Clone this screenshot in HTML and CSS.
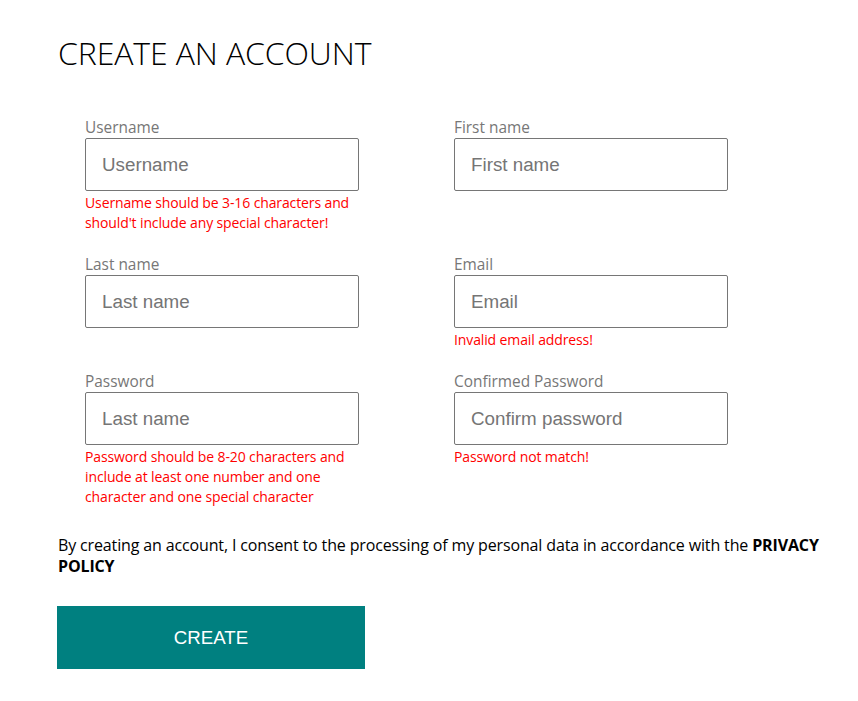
FILE: index.html
```html
<!DOCTYPE html>
<html lang="en">
<head>
<meta charset="utf-8">
<title>Create an account</title>
<link rel="stylesheet" href="styles.css">
</head>
<body>
<main class="page">
  <h1 class="title">CREATE AN ACCOUNT</h1>
  <form class="form">
    <div class="field">
      <label class="label">Username</label>
      <input class="input" type="text" placeholder="Username">
      <div class="error">Username should be 3-16 characters and should't include any special character!</div>
    </div>
    <div class="field">
      <label class="label">First name</label>
      <input class="input" type="text" placeholder="First name">
    </div>
    <div class="field">
      <label class="label">Last name</label>
      <input class="input" type="text" placeholder="Last name">
    </div>
    <div class="field">
      <label class="label">Email</label>
      <input class="input" type="text" placeholder="Email">
      <div class="error">Invalid email address!</div>
    </div>
    <div class="field">
      <label class="label">Password</label>
      <input class="input" type="text" placeholder="Last name">
      <div class="error">Password should be 8-20 characters and include at least one number and one character and one special character</div>
    </div>
    <div class="field">
      <label class="label">Confirmed Password</label>
      <input class="input" type="text" placeholder="Confirm password">
      <div class="error">Password not match!</div>
    </div>
  </form>
  <p class="consent">By creating an account, I consent to the processing of my personal data in accordance with the <b>PRIVACY</b> <b>POLICY</b></p>
  <button class="create" type="button">CREATE</button>
</main>
</body>
</html>
```
FILE: styles.css
```css
html, body {
  margin: 0;
  padding: 0;
  background: #ffffff;
}

.page {
  padding: 30px 0 0 58px;
  font-family: "Open Sans", "Noto Sans", sans-serif;
}

.title {
  margin: 0;
  font-size: 32px;
  font-weight: 300;
  line-height: 46px;
  color: #000;
  letter-spacing: -0.12px;
}

.form {
  display: grid;
  grid-template-columns: 274px 274px;
  column-gap: 95px;
  row-gap: 21px;
  align-items: start;
  margin: 41px 0 0 27px;
}

.field {
  display: flex;
  flex-direction: column;
}

.label {
  font-size: 15.4px;
  line-height: 21px;
  color: #777777;
}

.input {
  box-sizing: border-box;
  width: 274px;
  height: 53px;
  margin: 0;
  border: 1px solid #767676;
  border-radius: 2px;
  padding: 0 16px;
  font-family: "Liberation Sans", Arial, sans-serif;
  font-size: 18.8px;
  color: #000;
}

.input::placeholder {
  color: #757575;
}

.error {
  margin-top: 2px;
  font-size: 14px;
  line-height: 20px;
  color: #ff0000;
  letter-spacing: -0.12px;
}

.consent {
  width: 780px;
  margin: 28px 0 0 0;
  font-size: 16px;
  line-height: 21px;
  color: #000;
  letter-spacing: -0.14px;
}

.consent b {
  font-weight: 700;
}

.create {
  display: block;
  width: 308px;
  height: 63px;
  margin: 29px 0 0 -1px;
  border: none;
  background: #008080;
  color: #ffffff;
  font-family: "Liberation Sans", Arial, sans-serif;
  font-size: 18.7px;
}
```
